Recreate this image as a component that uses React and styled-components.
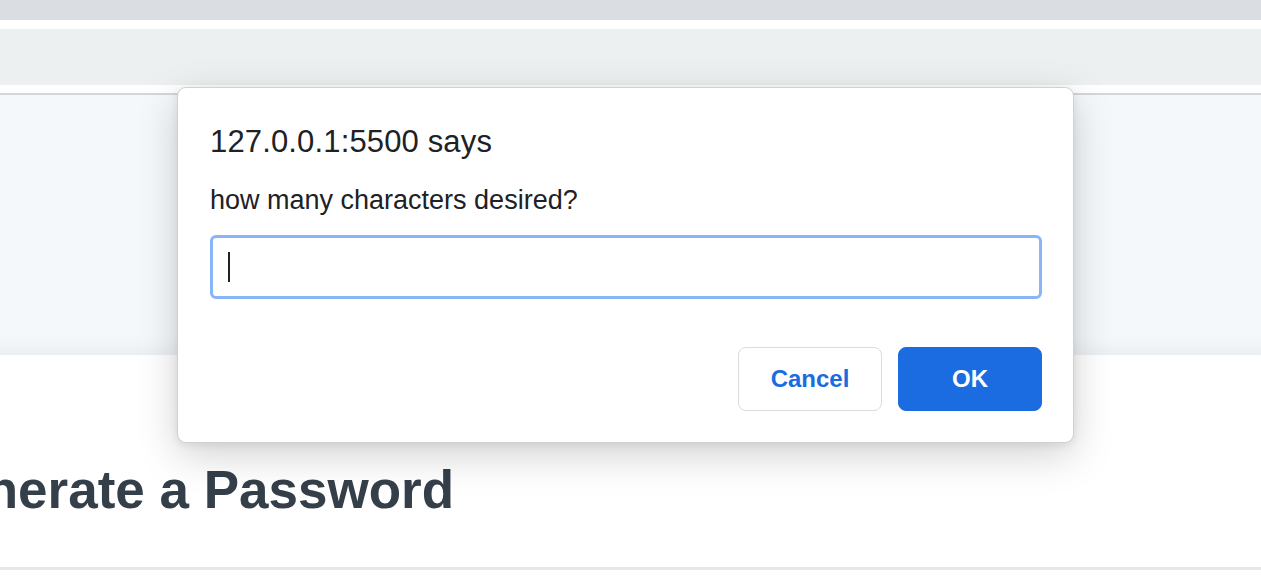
import React from "react";
import styled, { createGlobalStyle } from "styled-components";

const GlobalStyle = createGlobalStyle`
  html, body {
    margin: 0;
    padding: 0;
    background: #ffffff;
    overflow: hidden;
  }
  body {
    font-family: "Liberation Sans", Arial, sans-serif;
  }
`;

const Page = styled.div`
  position: relative;
  width: 1261px;
  height: 580px;
  display: flex;
  flex-direction: column;
  overflow: hidden;
`;

const TopStrip = styled.div`
  height: 20px;
  background: #dadde1;
  flex-shrink: 0;
`;

const NavBar = styled.div`
  margin-top: 9px;
  height: 56px;
  background: #edf0f1;
  flex-shrink: 0;
`;

const Hero = styled.div`
  margin-top: 8px;
  height: 260px;
  border-top: 2px solid #d3d7db;
  background: linear-gradient(to bottom, #f5f8fb 0%, #f5f8fb 93%, #eceff2 100%);
  flex-shrink: 0;
`;

const Main = styled.main`
  flex: 1;
  display: flex;
  flex-direction: column;
  padding-top: 108px;
`;

const Heading = styled.h1`
  margin: 0 0 0 -85px;
  font-family: "Liberation Sans", Arial, sans-serif;
  font-size: 53px;
  line-height: 1;
  font-weight: 700;
  color: #343f4a;
  white-space: nowrap;
`;

const BottomRule = styled.div`
  margin-top: auto;
  margin-bottom: 10px;
  height: 3px;
  background: #e5e8eb;
`;

const Dialog = styled.div`
  position: absolute;
  left: 177px;
  top: 87px;
  width: 897px;
  height: 356px;
  box-sizing: border-box;
  background: #ffffff;
  border: 1px solid rgba(0, 0, 0, 0.18);
  border-radius: 9px;
  box-shadow: 0 12px 40px rgba(0, 0, 0, 0.18), 0 2px 8px rgba(0, 0, 0, 0.08);
  padding: 38px 31px 31px 32px;
  display: flex;
  flex-direction: column;
  color: #202124;
`;

const Title = styled.div`
  font-size: 31px;
  line-height: 1;
  letter-spacing: 0.15px;
`;

const Message = styled.div`
  margin-top: 30px;
  font-size: 27px;
  line-height: 1;
`;

const Field = styled.div`
  margin-top: 21px;
  height: 64px;
  box-sizing: border-box;
  border: 3px solid #8ab4f8;
  border-radius: 6px;
  display: flex;
  align-items: center;
  padding-left: 15px;
`;

const Caret = styled.span`
  width: 2px;
  height: 30px;
  background: #202124;
`;

const Actions = styled.div`
  margin-top: auto;
  display: flex;
  justify-content: flex-end;
  gap: 16px;
`;

const Button = styled.button`
  width: 144px;
  height: 64px;
  box-sizing: border-box;
  border-radius: 8px;
  font-family: "Liberation Sans", Arial, sans-serif;
  font-size: 24px;
  font-weight: 700;
  cursor: pointer;
  border: 1px solid ${({ $primary }) => ($primary ? "#1b6ce0" : "#dadce0")};
  background: ${({ $primary }) => ($primary ? "#1b6ce0" : "#ffffff")};
  color: ${({ $primary }) => ($primary ? "#ffffff" : "#1a6ddf")};
`;

export default function App() {
  return (
    <>
      <GlobalStyle />
      <Page>
        <TopStrip />
        <NavBar />
        <Hero />
        <Main>
          <Heading>Generate a Password</Heading>
          <BottomRule />
        </Main>

        <Dialog role="dialog">
          <Title>127.0.0.1:5500 says</Title>
          <Message>how many characters desired?</Message>
          <Field>
            <Caret />
          </Field>
          <Actions>
            <Button>Cancel</Button>
            <Button $primary>OK</Button>
          </Actions>
        </Dialog>
      </Page>
    </>
  );
}
